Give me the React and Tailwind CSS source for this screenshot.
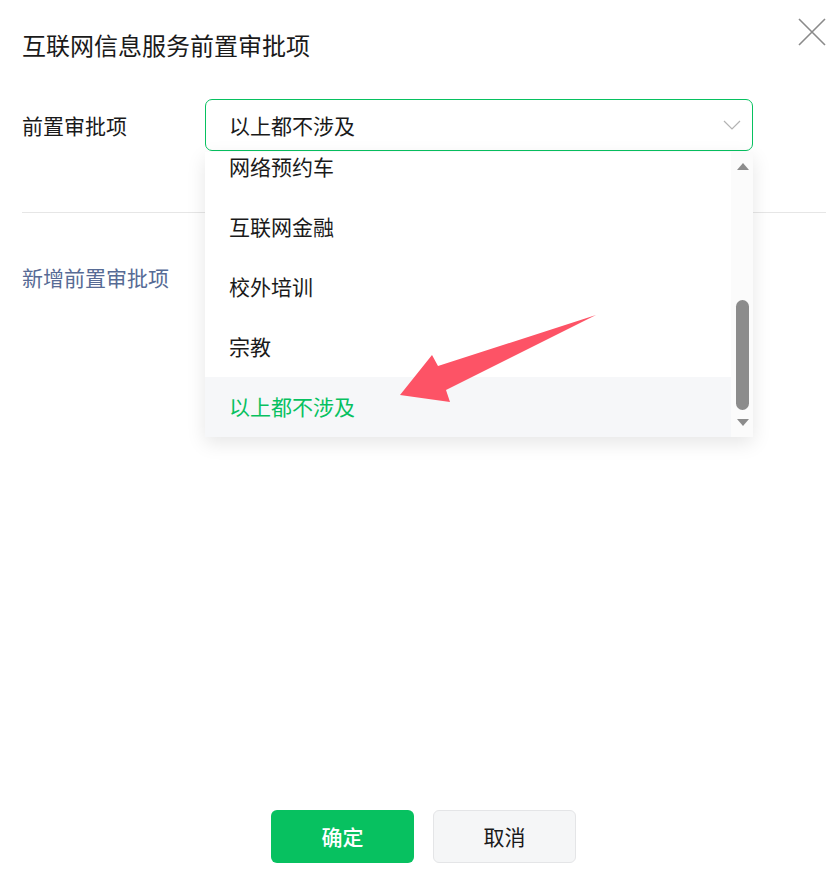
import React from "react";

const font = { fontFamily: '"Noto Sans CJK SC", "Noto Sans", sans-serif' };

function CloseIcon() {
  return (
    <svg width="30" height="30" viewBox="0 0 30 30" fill="none">
      <path d="M2 2 L28 28 M28 2 L2 28" stroke="#8a8a8a" strokeWidth="1.6" />
    </svg>
  );
}

function Chevron() {
  return (
    <svg width="18" height="10" viewBox="0 0 18 10" fill="none">
      <path d="M1 1 L9 9 L17 1" stroke="#b3b3b3" strokeWidth="1.2" />
    </svg>
  );
}

const items = ["网络预约车", "互联网金融", "校外培训", "宗教", "以上都不涉及"];

export default function App() {
  return (
    <div
      className="relative flex h-[875px] w-[830px] flex-col bg-white text-[#1a1a1a]"
      style={font}
    >
      {/* header */}
      <div className="flex h-[90px] items-start justify-between pl-[22px] pr-[3px]">
        <div className="mt-[29px] text-[24px] leading-[32px]">互联网信息服务前置审批项</div>
        <div className="mt-[17px]">
          <CloseIcon />
        </div>
      </div>

      {/* form row */}
      <div className="relative mt-[9px] flex h-[52px] items-center pl-[22px]">
        <div className="w-[183px] text-[21px] leading-[30px]">前置审批项</div>
        <div className="relative flex h-[52px] w-[548px] items-center justify-between rounded-[7px] border border-[#07c160] pl-[23px] pr-[11px]">
          <span className="text-[21px] leading-[30px]">以上都不涉及</span>
          <Chevron />

          {/* dropdown */}
          <div className="absolute left-[-1px] top-[52px] z-10 flex h-[285px] w-[548px] overflow-hidden bg-white shadow-[0_6px_18px_rgba(0,0,0,0.10)]">
            <div className="flex-1 overflow-hidden">
              <div className="mt-[-15px] flex flex-col">
                {items.map((it, i) => {
                  const active = i === items.length - 1;
                  return (
                    <div
                      key={it}
                      className={
                        active
                          ? "flex h-[60px] items-center bg-[#f6f7f9] pl-[24px] text-[21px] text-[#07c160]"
                          : "flex h-[60px] items-center pl-[24px] text-[21px] text-[#1a1a1a]"
                      }
                    >
                      {it}
                    </div>
                  );
                })}
              </div>
            </div>
            <div className="flex w-[22px] flex-col items-center bg-[#fbfbfb] pt-[11px] pl-[1px]">
              <svg width="12" height="7" viewBox="0 0 12 7">
                <path d="M0 7 L6 0 L12 7 Z" fill="#8c8c8c" />
              </svg>
              <div className="mt-[130px] h-[110px] w-[13px] rounded-full bg-[#8c8c8c]" />
              <svg className="mt-[9px]" width="12" height="7" viewBox="0 0 12 7">
                <path d="M0 0 L6 7 L12 0 Z" fill="#8c8c8c" />
              </svg>
            </div>
          </div>
        </div>
      </div>

      {/* divider */}
      <div className="ml-[22px] mr-[4px] mt-[61px] h-px bg-[#e6e6e6]" />

      {/* add link */}
      <div className="ml-[22px] mt-[49px] text-[21px] leading-[30px] text-[#576b95]">新增前置审批项</div>

      {/* buttons */}
      <div className="mt-auto mb-[12px] flex justify-center gap-[19px] pl-[17px]">
        <button className="flex h-[53px] w-[143px] items-center justify-center rounded-[6px] bg-[#07c160] text-[21px] font-medium text-white">
          确定
        </button>
        <button className="flex h-[53px] w-[143px] items-center justify-center rounded-[6px] border border-[#e4e5e7] bg-[#f5f6f7] text-[21px] text-[#1a1a1a]">
          取消
        </button>
      </div>

      {/* annotation arrow */}
      <svg
        className="pointer-events-none absolute left-0 top-0 z-20"
        width="830"
        height="875"
        viewBox="0 0 830 875"
      >
        <polygon
          points="596,315 438,366 432,355 400,395 450,402 446,390"
          fill="#fd5366"
        />
      </svg>
    </div>
  );
}
